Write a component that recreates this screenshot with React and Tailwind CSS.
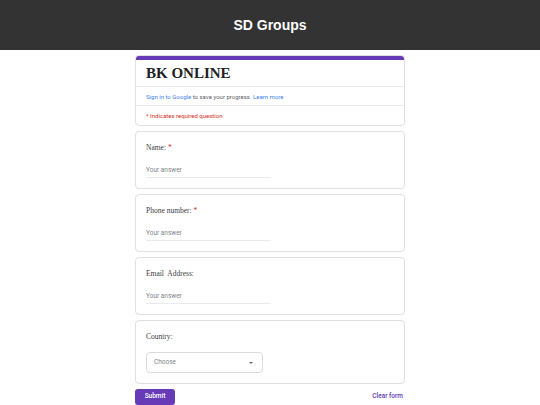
import React from 'react';

const serif = { fontFamily: '"Liberation Serif", "Times New Roman", serif' };
const roboto = { fontFamily: 'Roboto, "Liberation Sans", Arial, sans-serif' };

function TextQuestion({ label, required }) {
  return (
    <div className="bg-white border border-[#e0e0e0] rounded-[4px] h-[58px] px-[10px] pt-[11px]">
      <div className="text-[7.5px] leading-[10px] text-[#3c4043] whitespace-pre" style={serif}>
        {label}
        {required && <span className="text-[#d93025]"> *</span>}
      </div>
      <div className="mt-[13px] w-[125px] border-b border-[#e8eaed] pb-[2px] text-[6.5px] leading-[9px] text-[#80868b]" style={roboto}>
        Your answer
      </div>
    </div>
  );
}

export default function App() {
  return (
    <div className="min-h-[405px] bg-white">
      <div className="h-[50px] bg-[#333333] flex items-center justify-center">
        <h1 className="text-white font-bold text-[14px]" style={{ fontFamily: '"Liberation Sans", Arial, sans-serif' }}>
          SD Groups
        </h1>
      </div>

      <div className="w-[270px] mx-auto mt-[5px] flex flex-col gap-[5px]">
        <div className="bg-white border border-[#e0e0e0] rounded-[4px] overflow-hidden">
          <div className="h-[4px] bg-[#673ab7]" />
          <div className="h-[27px] flex items-center px-[10px] border-b border-[#e8eaed]">
            <span className="font-bold text-[15px] text-[#202124]" style={serif}>BK ONLINE</span>
          </div>
          <div className="h-[19px] flex items-center px-[10px] border-b border-[#e8eaed] text-[6px] text-[#5f6368]" style={roboto}>
            <span className="text-[#4285f4]">Sign in to Google</span>&nbsp;to save your progress.&nbsp;
            <span className="text-[#4285f4]">Learn more</span>
          </div>
          <div className="h-[19px] flex items-center px-[10px] text-[6px] text-[#d93025]" style={roboto}>
            * Indicates required question
          </div>
        </div>

        <TextQuestion label="Name:" required />
        <TextQuestion label="Phone number:" required />
        <TextQuestion label="Email  Address:" />

        <div className="bg-white border border-[#e0e0e0] rounded-[4px] h-[64px] px-[10px] pt-[11px]">
          <div className="text-[7.5px] leading-[10px] text-[#3c4043]" style={serif}>Country:</div>
          <div className="mt-[10px] w-[117px] h-[21px] border border-[#dadce0] rounded-[4px] flex items-center justify-between pl-[7px] pr-[9px]" style={roboto}>
            <span className="text-[6.5px] text-[#80868b]">Choose</span>
            <span className="w-0 h-0 border-l-[2.5px] border-r-[2.5px] border-t-[2.5px] border-l-transparent border-r-transparent border-t-[#5f6368]" />
          </div>
        </div>

        <div className="flex items-center justify-between" style={roboto}>
          <button className="w-[40px] h-[16px] bg-[#673ab7] rounded-[3px] text-white text-[6.5px] font-medium">Submit</button>
          <span className="text-[6.5px] font-medium text-[#673ab7] pr-[2px]">Clear form</span>
        </div>
      </div>
    </div>
  );
}
